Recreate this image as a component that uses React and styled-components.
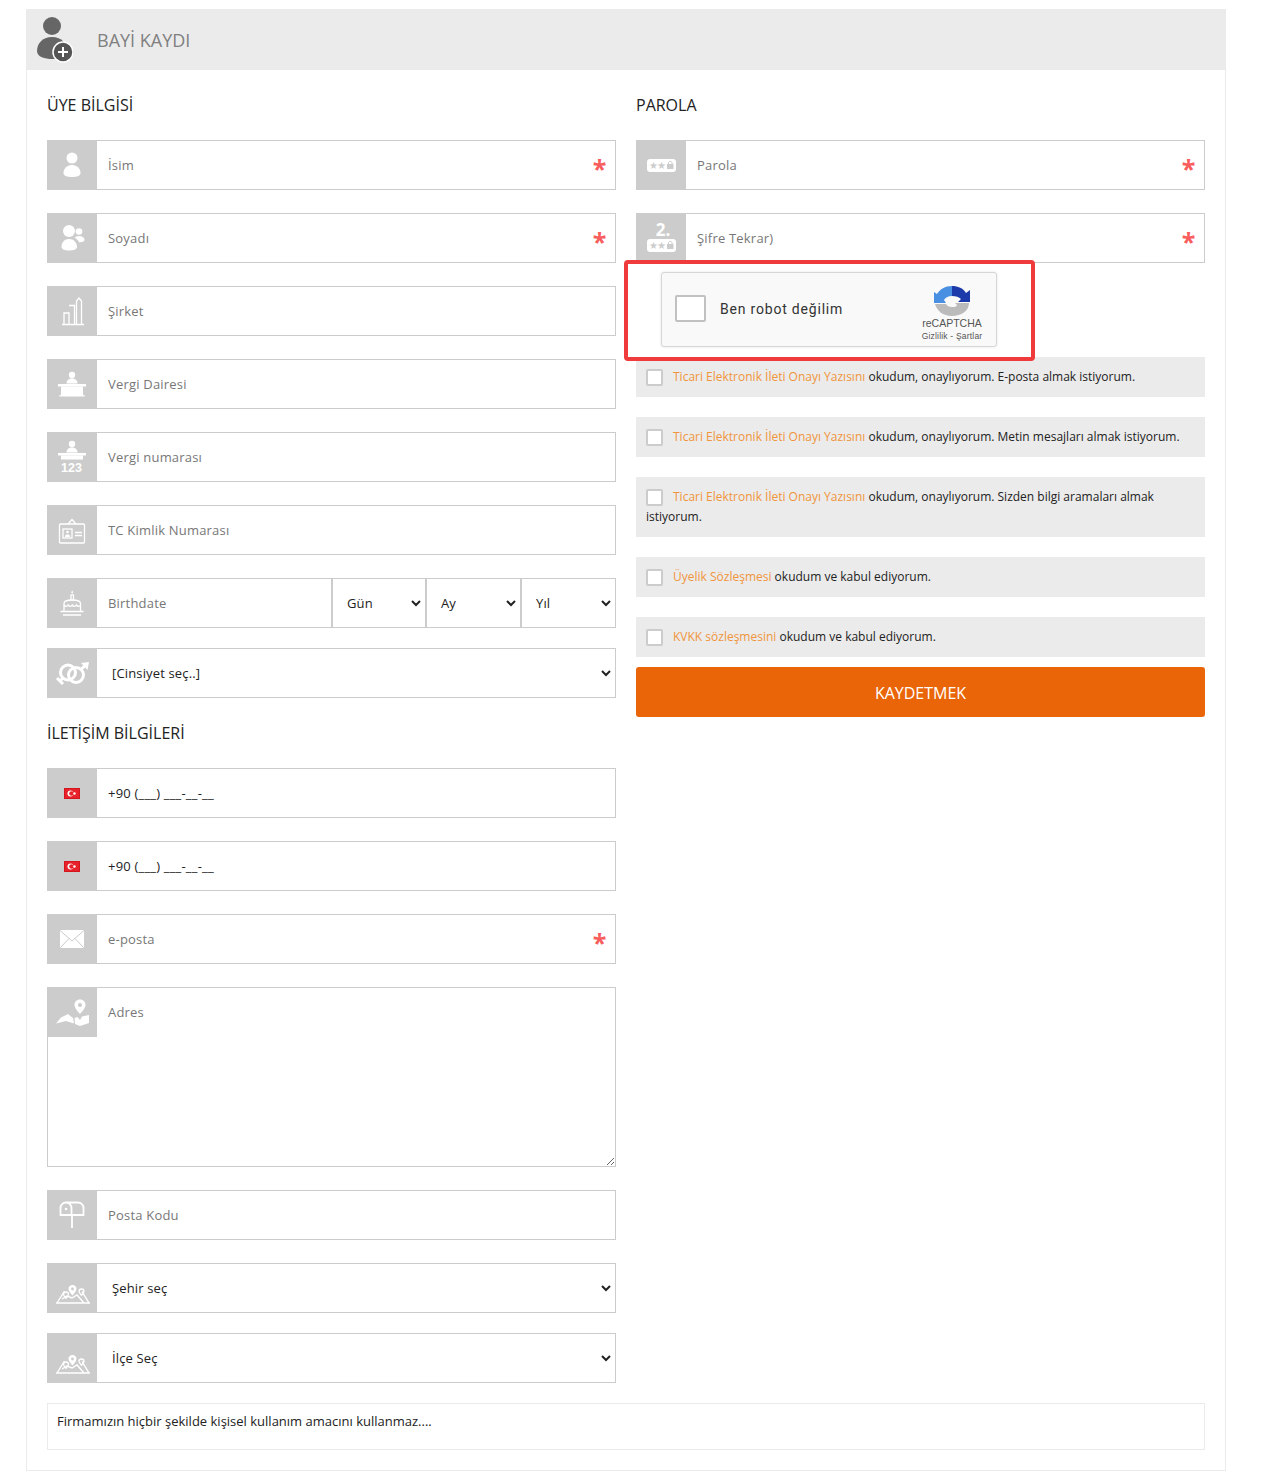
import React from "react"
import styled, { createGlobalStyle } from "styled-components"

const GlobalStyle = createGlobalStyle`
  html, body {
    margin: 0;
    padding: 0;
    background: #fff;
    font-family: "Open Sans", "Liberation Sans", sans-serif;
    font-size: 13px;
    color: #222;
  }
  * { box-sizing: border-box; }
`

const Page = styled.div`
  padding: 9px 36px 9px 26px;
`

const Panel = styled.div`
  width: 1200px;
  border: 1px solid #ebebeb;
  border-top: 0;
`

const PanelHead = styled.div`
  display: flex;
  align-items: center;
  height: 61px;
  background: #ebebeb;
  margin: 0 -1px;
  padding-left: 10px;
`

const PanelTitle = styled.h2`
  margin: 0 0 0 24px;
  font-size: 18px;
  font-weight: 400;
  color: #808080;
`

const PanelBody = styled.div`
  padding: 0 20px 20px;
`

const Columns = styled.div`
  display: grid;
  grid-template-columns: 569px 569px;
  column-gap: 20px;
`

const Heading = styled.h3`
  display: flex;
  align-items: center;
  height: 70px;
  margin: 0;
  font-size: 16px;
  font-weight: 400;
  color: #222;
`

const Row = styled.div`
  display: flex;
  height: 50px;
  margin-bottom: ${p => p.$gap ?? 23}px;
  border: 1px solid #ccc;
  border-left: 0;
  background: #fff;
`

const IconBox = styled.div`
  flex: none;
  width: 50px;
  height: 50px;
  margin-top: -1px;
  background: #ccc;
  display: flex;
  align-items: center;
  justify-content: center;
`

const Input = styled.input`
  flex: 1;
  min-width: 0;
  border: 0;
  outline: 0;
  padding: 0 0 0 11px;
  background: transparent;
  font: 13px "Open Sans", sans-serif;
  letter-spacing: 0.2px;
  color: #222;
  &::placeholder { color: #777; opacity: 1; }
`

const PhoneInput = styled(Input)`
  &::placeholder { color: #222; }
`

const Star = styled.span`
  flex: none;
  width: 21px;
  margin-right: 5px;
  font-size: 25px;
  font-weight: 700;
  line-height: 54px;
  text-align: center;
  color: #f95c5c;
`

const Select = styled.select`
  flex: ${p => (p.$width ? "none" : 1)};
  width: ${p => (p.$width ? `${p.$width}px` : "auto")};
  border: 0;
  border-left: ${p => (p.$width ? "2px solid #ccc" : 0)};
  border-right: 1px solid #fff;
  outline: 0;
  padding: 0 0 0 ${p => (p.$width ? 10 : 11)}px;
  background: #fff;
  font: 13px "Open Sans", sans-serif;
  letter-spacing: 0.15px;
  color: #222;
`

const AddressBox = styled.div`
  position: relative;
  height: 180px;
  margin-bottom: 23px;
`

const AddressIcon = styled(IconBox)`
  position: absolute;
  top: 1px;
  left: 0;
`

const Textarea = styled.textarea`
  display: block;
  width: 100%;
  height: 100%;
  border: 1px solid #ccc;
  outline: 0;
  padding: 15px 10px 0 60px;
  font: 13px "Open Sans", sans-serif;
  letter-spacing: 0.2px;
  &::placeholder { color: #777; opacity: 1; }
`

const RightCol = styled.div``

const CaptchaWrap = styled.div`
  position: relative;
  width: 336px;
  height: 75px;
  margin: -14px 0 10px 25px;
`

const RedFrame = styled.div`
  position: absolute;
  top: -12px;
  left: -37px;
  width: 411px;
  height: 101px;
  border: 4px solid #ef3b3b;
  border-radius: 4px;
  pointer-events: none;
`

const Captcha = styled.div`
  display: flex;
  align-items: center;
  height: 100%;
  background: #f9f9f9;
  border: 1px solid #d6d6d6;
  border-radius: 3px;
  box-shadow: 0 0 3px rgba(0, 0, 0, 0.1);
  padding: 0 13px;
`

const CaptchaCheck = styled.div`
  flex: none;
  width: 31px;
  height: 27px;
  margin-top: -2px;
  background: #fff;
  border: 2px solid #c1c1c1;
  border-radius: 2px;
`

const CaptchaLabel = styled.span`
  flex: 1;
  margin: -2px 0 0 14px;
  font-family: Roboto, sans-serif;
  font-size: 14px;
  letter-spacing: 0.8px;
  color: #333;
`

const CaptchaBrand = styled.div`
  display: flex;
  flex-direction: column;
  align-items: center;
  width: 62px;
  margin-top: 7px;
  font-family: "Liberation Sans", sans-serif;
  color: #555;
`

const BrandName = styled.span`
  font-size: 10.5px;
  line-height: 12px;
`

const BrandLinks = styled.span`
  margin-top: 2px;
  font-size: 8.5px;
  letter-spacing: 0.2px;
  line-height: 10px;
  white-space: nowrap;
`

const Consent = styled.label`
  display: block;
  margin-bottom: ${p => p.$gap ?? 20}px;
  padding: 10px;
  background: #ebebeb;
  font-size: 12px;
  line-height: 20px;
  color: #222;
`

const ConsentBox = styled.input`
  appearance: none;
  width: 17px;
  height: 17px;
  margin: 0 10px 0 0;
  vertical-align: -5px;
  background: #fff;
  border: 2px solid #ccc;
  border-radius: 2px;
`

const ConsentLink = styled.a`
  color: #f0953c;
  text-decoration: none;
`

const SaveButton = styled.button`
  display: block;
  width: 100%;
  height: 50px;
  border: 0;
  border-radius: 3px;
  padding: 2px 0 0;
  background: #ea6508;
  color: #fff;
  font: 16px "Open Sans", sans-serif;
`

const Note = styled.div`
  height: 47px;
  margin-top: 20px;
  padding: 8px 9px;
  border: 1px solid #ebebeb;
  font-size: 13px;
  line-height: 18px;
  color: #222;
`

const Svg = ({ children, ...rest }) => (
  <svg width="50" height="50" viewBox="0 0 50 50" fill="#fff" {...rest}>{children}</svg>
)

const line = { fill: "none", stroke: "#fff", strokeWidth: 1.3 }

const UserIcon = () => (
  <Svg>
    <circle cx="25" cy="18" r="5.500" />
    <path d="M25 25c-5.500 0-8.500 4-8.500 8 0 3 4 4 8.500 4s8.500-1 8.500-4c0-4-3-8-8.500-8z" />
  </Svg>
)

const UsersIcon = () => (
  <Svg>
    <circle cx="22" cy="18" r="6" />
    <path d="M22 26c-6 0-7.500 5-7.500 8 0 2.500 3.500 3.500 7.500 3.500s8-1 8-3.500c0-3-2-8-8-8z" />
    <circle cx="32" cy="18.500" r="3.300" />
    <path d="M32 23c-2 0-3.500.8-4.300 1.800 2 1 3.500 2.500 4.300 4.500 3 0 5.500-.7 5.500-2.500 0-2-2-3.800-5.500-3.800z" />
  </Svg>
)

const ChartIcon = () => (
  <Svg>
    <path {...line} d="M15 38.500h22M17 38V27h5v11M22 19.500h5.500V38M29.500 38V15l2.500-3 2.500 3v23" />
  </Svg>
)

const DeskShape = ({ top }) => (
  <>
    <circle cx="25" cy={top + 3} r="3.200" />
    <path d={`M19.500 ${top + 11.500}c0-3.500 2.500-5 5.500-5s5.500 1.500 5.500 5z`} />
    <rect x="11" y={top + 12} width="28" height="2.500" />
  </>
)

const DeskIcon = () => (
  <Svg>
    <DeskShape top={13} />
    <rect x="14" y="27.500" width="22" height="9" />
    <rect x="12.500" y="36" width="25" height="1.500" />
  </Svg>
)

const DeskNumberIcon = () => (
  <Svg>
    <DeskShape top={9} />
    <rect x="14" y="23.500" width="22" height="4" />
    <text x="24.500" y="40" textAnchor="middle" fontFamily="Liberation Sans, sans-serif" fontWeight="700" fontSize="12.500" fill="#fff">123</text>
  </Svg>
)

const CardIcon = () => (
  <Svg>
    <rect {...line} x="12.500" y="19" width="25" height="19" rx="1" />
    <path {...line} d="M21 19l4-4.500 4 4.500" />
    <rect {...line} x="16" y="24" width="9" height="9" />
    <circle cx="20.500" cy="27" r="1.300" />
    <path d="M18 32c0-2 1-2.500 2.500-2.500S23 30 23 32z" />
    <path {...line} d="M28 27.500h7M28 30.500h7" />
  </Svg>
)

const CakeIcon = () => (
  <Svg>
    <rect {...line} x="24" y="17" width="2.500" height="5" />
    <path d="M25.200 12.500c1 1.300 1.300 2 0 3.300-1.300-1.300-1-2 0-3.300z" />
    <path {...line} d="M17 33V25.500c0-2.500 3-3.500 8.200-3.500s8.300 1 8.300 3.500V33M17 27c1.500 1.800 3 1.800 4.100 0 1.300 1.800 3 1.800 4.100 0 1.300 1.800 3 1.800 4.100 0 1.300 1.800 3 1.800 4.200 0M13.500 33.500h23M16 37h18" />
  </Svg>
)

const GenderIcon = () => (
  <Svg>
    <g fill="none" stroke="#fff" strokeWidth="3">
      <circle cx="21" cy="24.500" r="7.500" />
      <circle cx="29" cy="27" r="7.500" />
      <path d="M34 21.500l4-4" />
      <path d="M16 30l-3 3M10 30l6 6" />
    </g>
    <path d="M34 15l8-1-1.500 8z" />
  </Svg>
)

const FlagIcon = () => (
  <Svg>
    <rect x="17.500" y="20.500" width="15" height="10" fill="#e8222b" stroke="#d3151d" strokeWidth="1" />
    <circle cx="23.500" cy="25.500" r="3" />
    <circle cx="24.500" cy="25.500" r="2.300" fill="#e8222b" />
    <circle cx="27.500" cy="25.500" r="1.200" />
  </Svg>
)

const MailIcon = () => (
  <Svg>
    <rect x="13" y="16" width="24" height="18" rx="1.500" />
    <path d="M13.500 17L25 27l11.500-10M13.500 33.500l8.500-9M36.500 33.500l-8.500-9" fill="none" stroke="#ccc" strokeWidth="1" />
  </Svg>
)

const MapPinIcon = () => (
  <Svg>
    <path d="M33 12.500c-3.300 0-5.500 2.500-5.500 5.300 0 3.200 3.500 7 5.500 9.200 2-2.200 5.500-6 5.500-9.200 0-2.800-2.200-5.300-5.500-5.300z" />
    <circle cx="33" cy="18" r="2" fill="#ccc" />
    <path d="M9 36.500l5-6 7-3.500 5 4 1 5.500-8-2.500zM27.500 31l3-1 2.500 3 2-3.500 7-1.500v8l-9 3-5-2z" />
  </Svg>
)

const MailboxIcon = () => (
  <Svg>
    <path {...line} strokeWidth="1.800" d="M13.500 25v-7c0-3 2.500-5.500 5.500-5.500h12c3 0 5.500 2.500 5.500 5.500v7zM24.500 25v-7c0-3-2.500-5.500-5.500-5.500M25 25v13" />
    <circle cx="19" cy="19" r="1.300" />
  </Svg>
)

const MapPinsIcon = () => (
  <Svg>
    <path {...line} strokeWidth="1.400" d="M10 40l7.500-12M42 40l-7-11.500M9 40h34M15 36l5-3 5 2 5-3 7 8" />
    <path d="M25.500 22c-2.500 0-4 1.800-4 3.800 0 2.300 2.500 5 4 6.700 1.500-1.700 4-4.400 4-6.700 0-2-1.500-3.800-4-3.800z" />
    <circle cx="25.500" cy="26" r="1.400" fill="#ccc" />
    <path {...line} d="M34.500 26c-1.500 0-2.500 1-2.500 2.300 0 1.400 1.500 3 2.500 4 1-1 2.500-2.600 2.500-4 0-1.300-1-2.300-2.500-2.300zM19 29c-1.500 0-2.500 1-2.500 2.300 0 1.400 1.500 3 2.500 4 1-1 2.500-2.600 2.500-4 0-1.300-1-2.300-2.500-2.300z" />
  </Svg>
)

const Pill = ({ y }) => (
  <>
    <rect x="11" y={y} width="29" height="13" rx="3" />
    <text x="13" y={y + 10} fontFamily="DejaVu Sans, sans-serif" fontSize="10" fill="#ccc">★</text>
    <text x="21" y={y + 10} fontFamily="DejaVu Sans, sans-serif" fontSize="10" fill="#ccc">★</text>
    <rect x="31" y={y + 5} width="6.500" height="5" fill="#ccc" />
    <path d={`M32.500 ${y + 5}v-1c0-2.200 3.500-2.200 3.500 0v1`} fill="none" stroke="#ccc" strokeWidth="1" />
  </>
)

const PasswordIcon = () => (
  <Svg><Pill y={19} /></Svg>
)

const PasswordTwoIcon = () => (
  <Svg>
    <text x="27" y="23" textAnchor="middle" fontFamily="Open Sans, sans-serif" fontWeight="700" fontSize="17" fill="#fff">2.</text>
    <Pill y={26} />
  </Svg>
)

const UserPlusIcon = () => (
  <svg width="37" height="46" viewBox="0 0 37 46" fill="#666">
    <circle cx="16" cy="9" r="9" />
    <path d="M16 20C6 20 1 27 1 34c0 6 8 8 15 8 7 0 15-2 15-8 0-7-5-14-15-14z" />
    <circle cx="27" cy="35" r="10" stroke="#fff" strokeWidth="1.500" fill="#555" />
    <path d="M27 30v10M22 35h10" stroke="#fff" strokeWidth="2" />
  </svg>
)

const RecaptchaLogo = () => (
  <svg width="36" height="32" viewBox="0 0 36 32">
    <path d="M18 1C11 1 6 4 3 9L0 7v11h12l-2-3c1-2 4-4 8-4z" fill="#4a90e2" />
    <path d="M18 1c6 0 11 2 14 7l4-3v12H24l3-3c-2-2-5-3-9-3z" fill="#1c3aa9" />
    <path d="M1 19h11c1 2 3 3 6 3 3 0 4 0 5-2l-2-2h14C35 26 27 31 18 31 9 31 3 26 1 19z" fill="#bbb" />
  </svg>
)

const Field = ({ icon: Icon, placeholder, required, as: Comp = Input, gap }) => (
  <Row $gap={gap}>
    <IconBox><Icon /></IconBox>
    <Comp placeholder={placeholder} />
    {required && <Star>*</Star>}
  </Row>
)

const SelectField = ({ icon: Icon, label, gap }) => (
  <Row $gap={gap}>
    <IconBox><Icon /></IconBox>
    <Select><option>{label}</option></Select>
  </Row>
)

const consents = [
  { link: "Ticari Elektronik İleti Onayı Yazısını", text: " okudum, onaylıyorum. E-posta almak istiyorum." },
  { link: "Ticari Elektronik İleti Onayı Yazısını", text: " okudum, onaylıyorum. Metin mesajları almak istiyorum." },
  { link: "Ticari Elektronik İleti Onayı Yazısını", text: " okudum, onaylıyorum. Sizden bilgi aramaları almak istiyorum." },
  { link: "Üyelik Sözleşmesi", text: " okudum ve kabul ediyorum." },
  { link: "KVKK sözleşmesini", text: " okudum ve kabul ediyorum.", gap: 10 },
]

const App = () => (
  <Page>
    <GlobalStyle />
    <Panel>
      <PanelHead>
        <UserPlusIcon />
        <PanelTitle>BAYİ KAYDI</PanelTitle>
      </PanelHead>
      <PanelBody>
        <Columns>
          <div>
            <Heading>ÜYE BİLGİSİ</Heading>
            <Field icon={UserIcon} placeholder="İsim" required />
            <Field icon={UsersIcon} placeholder="Soyadı" required />
            <Field icon={ChartIcon} placeholder="Şirket" />
            <Field icon={DeskIcon} placeholder="Vergi Dairesi" />
            <Field icon={DeskNumberIcon} placeholder="Vergi numarası" />
            <Field icon={CardIcon} placeholder="TC Kimlik Numarası" />
            <Row $gap={20}>
              <IconBox><CakeIcon /></IconBox>
              <Input placeholder="Birthdate" />
              <Select $width={94}><option>Gün</option></Select>
              <Select $width={95}><option>Ay</option></Select>
              <Select $width={95}><option>Yıl</option></Select>
            </Row>
            <SelectField icon={GenderIcon} label="[Cinsiyet seç..]" gap={0} />
            <Heading>İLETİŞİM BİLGİLERİ</Heading>
            <Field icon={FlagIcon} placeholder="+90 (___) ___-__-__" as={PhoneInput} />
            <Field icon={FlagIcon} placeholder="+90 (___) ___-__-__" as={PhoneInput} />
            <Field icon={MailIcon} placeholder="e-posta" required />
            <AddressBox>
              <Textarea placeholder="Adres" />
              <AddressIcon><MapPinIcon /></AddressIcon>
            </AddressBox>
            <Field icon={MailboxIcon} placeholder="Posta Kodu" />
            <SelectField icon={MapPinsIcon} label="Şehir seç" gap={20} />
            <SelectField icon={MapPinsIcon} label="İlçe Seç" gap={0} />
          </div>
          <RightCol>
            <Heading>PAROLA</Heading>
            <Field icon={PasswordIcon} placeholder="Parola" required />
            <Field icon={PasswordTwoIcon} placeholder="Şifre Tekrar)" required />
            <CaptchaWrap>
              <Captcha>
                <CaptchaCheck />
                <CaptchaLabel>Ben robot değilim</CaptchaLabel>
                <CaptchaBrand>
                  <RecaptchaLogo />
                  <BrandName>reCAPTCHA</BrandName>
                  <BrandLinks>Gizlilik - Şartlar</BrandLinks>
                </CaptchaBrand>
              </Captcha>
              <RedFrame />
            </CaptchaWrap>
            {consents.map((c, i) => (
              <Consent key={i} $gap={c.gap}>
                <ConsentBox type="checkbox" />
                <ConsentLink>{c.link}</ConsentLink>{c.text}
              </Consent>
            ))}
            <SaveButton>KAYDETMEK</SaveButton>
          </RightCol>
        </Columns>
        <Note>Firmamızın hiçbir şekilde kişisel kullanım amacını kullanmaz....</Note>
      </PanelBody>
    </Panel>
  </Page>
)

export default App
